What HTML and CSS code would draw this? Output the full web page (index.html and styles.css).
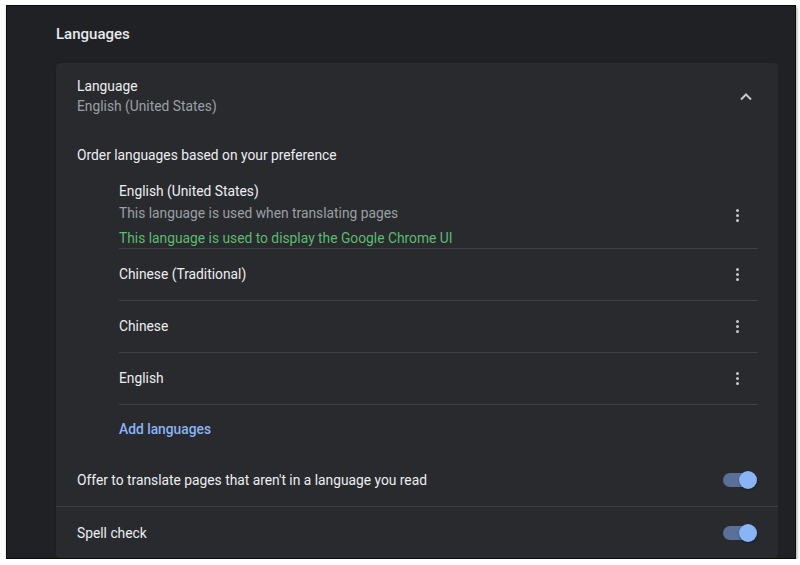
FILE: index.html
```html
<!DOCTYPE html>
<html>
<head>
<meta charset="utf-8">
<link rel="stylesheet" href="styles.css">
</head>
<body>
<div class="frame">
  <h2 class="section-title">Languages</h2>
  <div class="card">
    <div class="row header-row">
      <div class="stack">
        <div class="primary">Language</div>
        <div class="secondary">English (United States)</div>
      </div>
      <div class="chevron">
        <svg width="20" height="20" viewBox="0 0 20 20"><polyline points="5,12.5 10,7.5 15,12.5" fill="none" stroke="#c4c7cb" stroke-width="2"/></svg>
      </div>
    </div>
    <div class="row order-row">
      <div class="primary">Order languages based on your preference</div>
    </div>
    <div class="lang-list">
      <div class="lang-item first">
        <div class="stack">
          <div class="primary">English (United States)</div>
          <div class="secondary l2">This language is used when translating pages</div>
          <div class="green l3">This language is used to display the Google Chrome UI</div>
        </div>
        <div class="dots"><span></span><span></span><span></span></div>
      </div>
      <div class="lang-item">
        <div class="primary">Chinese (Traditional)</div>
        <div class="dots"><span></span><span></span><span></span></div>
      </div>
      <div class="lang-item">
        <div class="primary">Chinese</div>
        <div class="dots"><span></span><span></span><span></span></div>
      </div>
      <div class="lang-item">
        <div class="primary">English</div>
        <div class="dots"><span></span><span></span><span></span></div>
      </div>
      <div class="add-row"><span class="link">Add languages</span></div>
    </div>
    <div class="row toggle-row divided">
      <div class="primary">Offer to translate pages that aren't in a language you read</div>
      <div class="toggle"><span class="track"></span><span class="knob"></span></div>
    </div>
    <div class="row toggle-row spell">
      <div class="primary">Spell check</div>
      <div class="toggle"><span class="track"></span><span class="knob"></span></div>
    </div>
  </div>
</div>
</body>
</html>
```

FILE: styles.css
```css
html, body {
  margin: 0;
  padding: 0;
  background: #ffffff;
}
body {
  padding: 5px 0 0 6px;
  font-family: Roboto, "Liberation Sans", Arial, sans-serif;
  font-size: 13.8px;
}
.frame {
  box-sizing: border-box;
  width: 790px;
  height: 554px;
  background: #202124;
  border: 1px solid #0c0c0d;
  box-shadow: 1px 2px 3px rgba(0,0,0,0.35);
  overflow: hidden;
  padding: 0 16px 0 49px;
}
.section-title {
  margin: 18px 0 0 0;
  height: 21px;
  line-height: 21px;
  font-size: 15px;
  font-weight: 500;
  color: #e8eaed;
  padding-bottom: 18px;
}
.card {
  background: #292a2d;
  border-radius: 4px;
  box-shadow: 0 0 1px rgba(0,0,0,0.4);
  width: 722px;
}
.row {
  display: flex;
  align-items: center;
  justify-content: space-between;
  padding: 0 21px;
}
.primary {
  color: #eceef1;
  line-height: 20px;
}
.secondary {
  color: #9aa0a6;
  line-height: 20px;
}
.green {
  color: #5bbb71;
  line-height: 20px;
}
.header-row {
  height: 66px;
}
.chevron {
  width: 20px;
  height: 20px;
  margin-right: 1px;
  margin-top: 1px;
}
.chevron svg {
  display: block;
}
.order-row {
  height: 52px;
}
.lang-list {
  margin: 0 21px 0 63px;
}
.lang-item {
  display: flex;
  align-items: center;
  justify-content: space-between;
  box-sizing: border-box;
  min-height: 52px;
  padding-bottom: 1px;
  border-bottom: 1px solid #3f4043;
}
.lang-item.first {
  padding: 0;
  min-height: 0;
}
.l2 {
  margin-top: 2px;
}
.l3 {
  margin-top: 5px;
}
.dots {
  width: 40px;
  display: flex;
  flex-direction: column;
  align-items: center;
  gap: 2px;
}
.dots span {
  width: 3px;
  height: 3px;
  border-radius: 50%;
  background: #c4c7cb;
}
.lang-item.first .dots {
  margin-top: 1px;
}
.add-row {
  height: 48px;
  display: flex;
  align-items: center;
}
.link {
  color: #8ab4f8;
  font-weight: 500;
}
.toggle-row {
  height: 54px;
  box-sizing: border-box;
}
.toggle-row.divided {
  border-bottom: 1px solid #3f4043;
}
.toggle-row.spell {
  height: 51px;
}
.toggle {
  position: relative;
  width: 34px;
  height: 18px;
}
.track {
  position: absolute;
  left: 0;
  top: 2px;
  width: 30px;
  height: 14px;
  border-radius: 7px;
  background: #5a7099;
}
.knob {
  position: absolute;
  right: 0;
  top: 0;
  width: 18px;
  height: 18px;
  border-radius: 50%;
  background: #8ab4f8;
  box-shadow: 0 1px 2px rgba(0,0,0,0.4);
}
```
